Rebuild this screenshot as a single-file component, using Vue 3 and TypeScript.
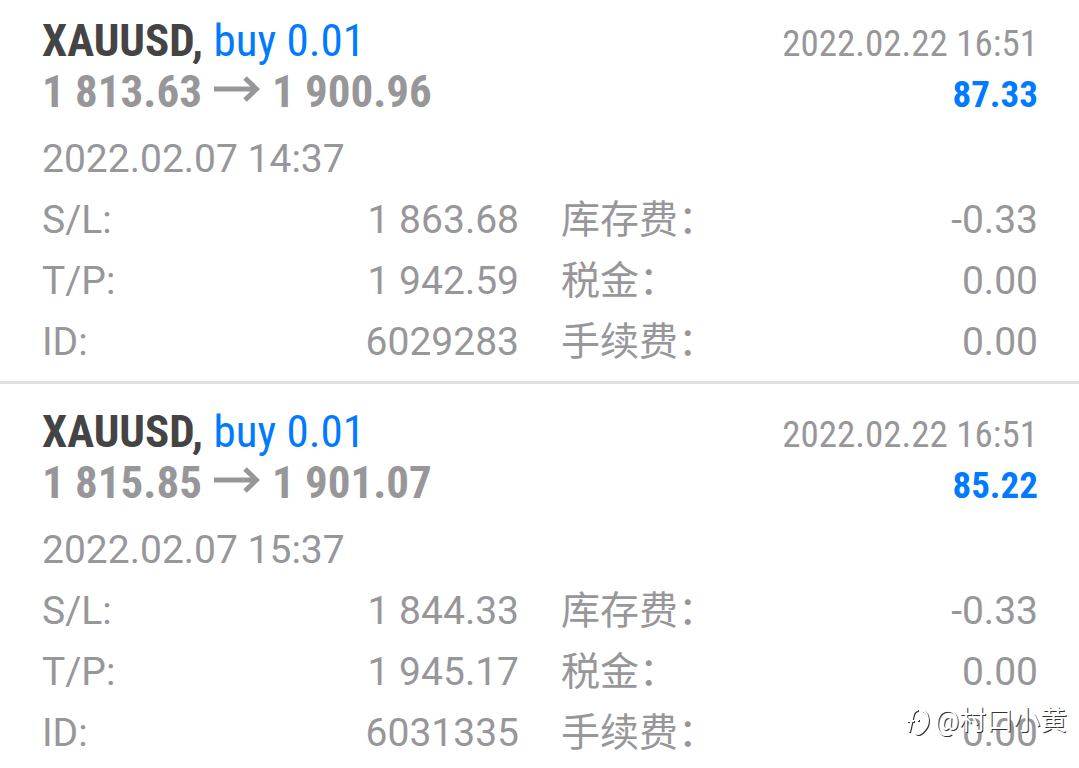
<script setup lang="ts">
interface Detail {
  label: string
  value: string
}

interface Deal {
  id: string
  symbol: string
  side: string
  openPrice: string
  closePrice: string
  openTime: string
  closeTime: string
  profit: string
  stopLoss: string
  takeProfit: string
  swap: string
  tax: string
  fee: string
}

const deals: Deal[] = [
  {
    id: '6029283', symbol: 'XAUUSD', side: 'buy 0.01',
    openPrice: '1 813.63', closePrice: '1 900.96',
    openTime: '2022.02.07 14:37', closeTime: '2022.02.22 16:51',
    profit: '87.33', stopLoss: '1 863.68', takeProfit: '1 942.59',
    swap: '-0.33', tax: '0.00', fee: '0.00',
  },
  {
    id: '6031335', symbol: 'XAUUSD', side: 'buy 0.01',
    openPrice: '1 815.85', closePrice: '1 901.07',
    openTime: '2022.02.07 15:37', closeTime: '2022.02.22 16:51',
    profit: '85.22', stopLoss: '1 844.33', takeProfit: '1 945.17',
    swap: '-0.33', tax: '0.00', fee: '0.00',
  },
]

function details(deal: Deal): Detail[] {
  return [
    { label: 'S/L:', value: deal.stopLoss },
    { label: '库存费：', value: deal.swap },
    { label: 'T/P:', value: deal.takeProfit },
    { label: '税金：', value: deal.tax },
    { label: 'ID:', value: deal.id },
    { label: '手续费：', value: deal.fee },
  ]
}
</script>

<template>
  <main class="history">
    <article v-for="deal in deals" :key="deal.id" class="deal">
      <header class="line">
        <h2 class="title">{{ deal.symbol }}, <span class="side">{{ deal.side }}</span></h2>
        <time class="closed">{{ deal.closeTime }}</time>
      </header>
      <div class="line">
        <p class="prices">
          <span>{{ deal.openPrice }}</span>
          <svg class="arrow" viewBox="0 0 46 26" aria-hidden="true">
            <path d="M0 13H43M31 2L42.500 13L31 24" />
          </svg>
          <span>{{ deal.closePrice }}</span>
        </p>
        <strong class="profit">{{ deal.profit }}</strong>
      </div>
      <time class="opened">{{ deal.openTime }}</time>
      <dl class="details">
        <div v-for="item in details(deal)" :key="item.label" class="detail">
          <dt>{{ item.label }}</dt>
          <dd>{{ item.value }}</dd>
        </div>
      </dl>
    </article>
    <div class="watermark">
      <svg class="mark" viewBox="0 0 24 30" aria-hidden="true">
        <path d="M12 4C8 4 7 7 6 13L3 26M1 15H8M11 14H13M16 4C23 7 24 18 18 24C15 28 12 29 9 27" />
      </svg>
      <span>@村口小黄</span>
    </div>
  </main>
</template>

<style>
body {
  margin: 0;
  background: #fff;
}
</style>

<style scoped>
.history {
  position: relative;
  min-height: 100vh;
  overflow: hidden;
  box-sizing: border-box;
  background: #fff;
  color: #97979a;
  font-family: Roboto, "Noto Sans CJK SC", sans-serif;
  font-size: 39px;
  line-height: 61px;
}
.deal {
  padding: 15px 41px 8px 42px;
}
.deal + .deal {
  padding-top: 22px;
  border-top: 3px solid #e1e1e1;
}
.deal:nth-child(2) {
  padding-bottom: 0;
}
.line {
  display: flex;
  justify-content: space-between;
  align-items: baseline;
  line-height: 51px;
  font-family: "Roboto Condensed", "Liberation Sans Narrow", Roboto, sans-serif;
}
.title,
.prices {
  margin: 0;
  font-size: 45px;
  font-weight: 700;
}
.title {
  color: #444;
}
.side {
  color: #007aff;
  font-weight: 400;
}
.prices {
  display: flex;
  align-items: center;
  gap: 12px;
}
.arrow {
  width: 46px;
  height: 26px;
  margin-bottom: 5px;
}
.arrow path,
.mark path {
  fill: none;
  stroke: currentColor;
  stroke-width: 5;
}
.closed,
.profit {
  font-size: 37px;
  line-height: 44px;
}
.profit {
  color: #007aff;
  font-weight: 700;
}
.opened {
  display: block;
  margin-top: 12px;
}
.details {
  display: grid;
  grid-template-columns: 1fr 1fr;
  column-gap: 42px;
  margin: 0;
}
.detail {
  display: flex;
  justify-content: space-between;
}
.detail dd {
  margin: 0;
}
.watermark {
  position: absolute;
  right: 12px;
  bottom: 28px;
  display: flex;
  align-items: center;
  gap: 5px;
  color: #fff;
  font-size: 27px;
  line-height: 38px;
  text-shadow: 1px 1px 0 #333;
}
.mark {
  width: 24px;
  height: 30px;
  filter: drop-shadow(1px 1px 0 #333);
}
.mark path {
  stroke-width: 2;
}
</style>
